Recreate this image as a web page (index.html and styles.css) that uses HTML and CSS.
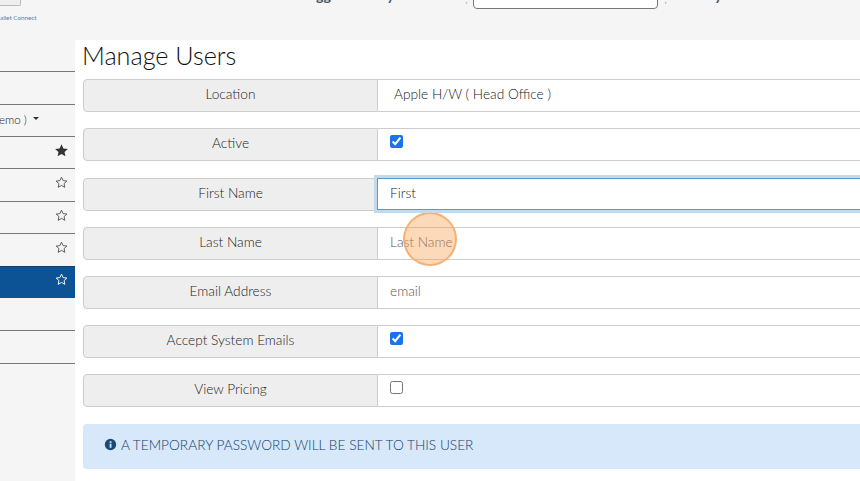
FILE: index.html
```html
<!DOCTYPE html>
<html lang="en">
<head>
<meta charset="utf-8">
<title>Manage Users</title>
<link rel="stylesheet" href="styles.css">
</head>
<body>
<header class="topbar">
  <div class="wallet">
    <div class="wallet-btn"></div>
    <a class="wallet-link">allet Connect</a>
  </div>
  <div class="top-center">
    <span class="clipped c1">gg</span>
    <span class="clipped c2">y</span>
    <span class="tick t1">,</span>
    <div class="top-input"></div>
    <span class="tick">,</span>
    <span class="clipped c3">y</span>
  </div>
</header>
<div class="layout">
  <aside class="sidebar">
    <div class="side-row"></div>
    <div class="side-row drop"><span class="side-text">emo )</span><span class="caret"></span></div>
    <div class="side-row"><svg class="star" viewBox="0 0 24 24"><path class="solid" d="M12 2l3 6.600 7.200.8-5.400 4.800 1.500 7.100L12 17.700l-6.300 3.600 1.500-7.100L1.800 9.400 9 8.600z"/></svg></div>
    <div class="side-row"><svg class="star" viewBox="0 0 24 24"><path d="M12 3.500l2.600 5.500 6 .7-4.500 4.100 1.200 5.900-5.300-3-5.300 3 1.200-5.900-4.500-4.100 6-.7z"/></svg></div>
    <div class="side-row"><svg class="star" viewBox="0 0 24 24"><path d="M12 3.500l2.600 5.500 6 .7-4.500 4.100 1.200 5.900-5.300-3-5.300 3 1.200-5.900-4.500-4.100 6-.7z"/></svg></div>
    <div class="side-row"><svg class="star" viewBox="0 0 24 24"><path d="M12 3.500l2.600 5.500 6 .7-4.500 4.100 1.200 5.900-5.300-3-5.300 3 1.200-5.900-4.500-4.100 6-.7z"/></svg></div>
    <div class="side-row active"><svg class="star" viewBox="0 0 24 24"><path d="M12 3.500l2.600 5.500 6 .7-4.500 4.100 1.200 5.900-5.300-3-5.300 3 1.200-5.900-4.500-4.100 6-.7z"/></svg></div>
    <div class="side-row after"></div>
    <div class="side-row"></div>
    <div class="side-row"></div>
  </aside>
  <main class="main">
    <h1 class="title">Manage Users</h1>
    <div class="form">
      <div class="row"><label class="lbl">Location</label><div class="val text">Apple H/W ( Head Office )</div></div>
      <div class="row"><label class="lbl">Active</label><div class="val"><input class="check" type="checkbox" checked></div></div>
      <div class="row"><label class="lbl">First Name</label><div class="val focus">First</div></div>
      <div class="row"><label class="lbl">Last Name</label><div class="val ph">Last Name<span class="spot"></span></div></div>
      <div class="row"><label class="lbl">Email Address</label><div class="val ph">email</div></div>
      <div class="row"><label class="lbl">Accept System Emails</label><div class="val"><input class="check" type="checkbox" checked></div></div>
      <div class="row"><label class="lbl">View Pricing</label><div class="val"><input class="check" type="checkbox"></div></div>
    </div>
    <div class="alert">
      <svg class="info" viewBox="0 0 16 16"><circle cx="8" cy="8" r="7" fill="#1b4a78"/><rect x="7" y="7" width="2.200" height="5" fill="#d6e8fa"/><rect x="7" y="4" width="2.200" height="2" fill="#d6e8fa"/></svg>
      <span>A TEMPORARY PASSWORD WILL BE SENT TO THIS USER</span>
    </div>
  </main>
</div>
</body>
</html>
```
FILE: styles.css
```css
* { box-sizing: border-box; }
html, body { margin: 0; height: 481px; overflow: hidden; }
body { background: #f5f5f5; font-family: Lato, "Open Sans", sans-serif; font-weight: 300; color: #1a1a1a; font-size: 13.7px; }
.topbar { height: 40px; display: flex; position: relative; }
.wallet { width: 300px; }
.wallet-btn { width: 21px; height: 6px; border: 1px solid #bbb; border-top: 0; border-left: 0; background: #efefef; border-radius: 0 0 2px 0; }
.wallet-link { display: block; margin-top: 8px; font-size: 6.300px; font-weight: 400; line-height: 8px; color: #5a80a8; }
.top-center { display: flex; align-items: flex-start; height: 10px; overflow: hidden; flex: 1; }
.clipped { font-size: 14px; line-height: 14px; margin-top: -11px; color: #456; font-weight: 700; }
.c1 { margin-left: 16px; }
.c2 { margin-left: 56px; }
.tick { font-size: 10px; line-height: 6px; margin-top: -4px; color: #777; }
.t1 { margin-left: 71px; }
.top-input { width: 185px; height: 10px; margin: -1px 6px 0; background: #fff; border: 1px solid #777; border-radius: 0 0 4px 4px; }
.c3 { margin-left: 48px; }
.layout { display: flex; height: 441px; }
.sidebar { width: 75px; padding-top: 31.300px; flex: none; }
.side-row { height: 32.400px; border-top: 1px solid #777; display: flex; align-items: center; justify-content: flex-end; padding: 0 6px 5px 0; position: relative; }
.side-text { position: absolute; left: 0; top: 8px; font-size: 11.500px; font-weight: 300; margin-left: -1px; }
.drop { justify-content: flex-start; }
.caret { position: absolute; left: 33px; top: 12px; border: 3px solid transparent; border-top: 3px solid #333; border-bottom: 0; }
.star { width: 15px; height: 15px; }
.star path { fill: none; stroke: #555; stroke-width: 1.500; }
.star path.solid { fill: #333; stroke: none; }
.active { background: #0b5394; border-top-color: #0a4274; }
.active .star path { stroke: #fff; }
.after { border-top: 0; }
.main { flex: 1; background: #fff; padding: 0 0 0 8px; min-width: 0; }
.title { margin: 0 0 0 -1px; font-size: 25.200px; font-weight: 300; line-height: 31px; height: 39.200px; color: #111; }
.form { display: flex; flex-direction: column; gap: 16.200px; margin-right: -10px; }
.row { display: flex; height: 33px; }
.lbl { width: 295px; flex: none; background: #eee; border: 1px solid #ccc; border-radius: 4px 0 0 4px; text-align: center; line-height: 28px; color: #222; }
.val { flex: 1; border: 1px solid #ccc; border-left: 0; background: #fff; padding-left: 12px; line-height: 28px; position: relative; }
.text { padding-left: 16px; }
.ph { color: #555; }
.focus { border: 1px solid #5b9bc8; box-shadow: 0 0 0 3px #c3d9ec; color: #222; height: 32px; margin-left: -1px; z-index: 1; }
.check { margin: 6px 0 0; width: 13px; height: 13px; accent-color: #1a73e8; display: block; }
.spot { position: absolute; left: 25px; top: -16px; width: 54px; height: 54px; border-radius: 50%; background: rgba(247, 160, 80, .4); border: 2px solid rgba(245, 170, 100, .85); }
.alert { display: flex; align-items: center; gap: 4px; margin-top: 16.600px; height: 45px; background: #d6e8fa; border-radius: 4px; padding: 0 0 3px 21px; color: #123d68; margin-right: -10px; }
.info { width: 13px; height: 13px; flex: none; }
```
